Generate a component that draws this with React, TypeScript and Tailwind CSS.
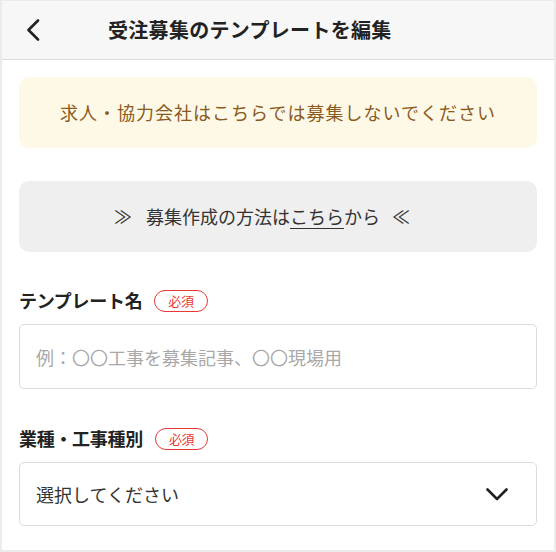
const font = { fontFamily: '"Noto Sans CJK JP", "Noto Sans", sans-serif' };

function RequiredBadge() {
    return (
        <span className="ml-[12px] inline-flex h-[22px] items-center rounded-full border-[1.5px] border-[#e53935] px-[13px] text-[13px] font-normal leading-none text-[#e53935]">
            必須
        </span>
    );
}

export default function App() {
    return (
        <div
            className="flex h-[552px] w-[556px] flex-col overflow-hidden border-x-2 border-b-2 border-t border-[#ebebeb] bg-white text-[#333]"
            style={font}
        >
            <header className="flex h-[59px] shrink-0 items-center border-b border-[#dedede] bg-[#f7f7f7]">
                <button type="button" className="ml-[24px] flex h-[24px] w-[16px] items-center" aria-label="戻る">
                    <svg width="14" height="22" viewBox="0 0 14 22" fill="none">
                        <path d="M12 1.5L2.5 11l9.5 9.5" stroke="#222" strokeWidth="2.6" strokeLinecap="round" strokeLinejoin="round" />
                    </svg>
                </button>
                <h1 className="ml-[66px] text-[20px] font-bold tracking-[0.3px] text-[#222]">受注募集のテンプレートを編集</h1>
            </header>

            <main className="flex flex-col px-[17px] pt-[17px]">
                <div className="flex h-[71px] items-center justify-center rounded-[10px] bg-[#fef9e7] text-[18px] tracking-[1px] text-[#8b5a1e]">
                    求人・協力会社はこちらでは募集しないでください
                </div>

                <div className="mt-[33px] flex h-[71px] items-center justify-center rounded-[10px] bg-[#efefef] pr-[32px] text-[18px] text-[#333]">
                    <span className="mr-[14px]">≫</span>
                    募集作成の方法は
                    <a className="underline underline-offset-4">こちら</a>
                    から
                    <span className="ml-[12px]">≪</span>
                </div>

                <label className="mt-[35px] flex items-center text-[18px] font-bold tracking-[-0.3px] text-[#222]">
                    テンプレート名
                    <RequiredBadge />
                </label>
                <input
                    className="mt-[10px] h-[65px] w-full rounded-[5px] border border-[#dcdcdc] px-4 text-[18px] text-[#333] outline-none placeholder:text-[#a8a8a8]"
                    placeholder="例：〇〇工事を募集記事、〇〇現場用"
                />

                <label className="mt-[36px] flex items-center text-[18px] font-bold tracking-[-0.3px] text-[#222]">
                    業種・工事種別
                    <RequiredBadge />
                </label>
                <button
                    type="button"
                    className="mt-[10px] flex h-[64px] w-full items-center justify-between rounded-[5px] border border-[#dcdcdc] pl-4 pr-[28px] text-[18px] text-[#333]"
                >
                    選択してください
                    <svg width="22" height="13" viewBox="0 0 22 13" fill="none">
                        <path d="M1.5 1.5l9.5 9.5 9.5-9.5" stroke="#222" strokeWidth="2.6" strokeLinecap="round" strokeLinejoin="round" />
                    </svg>
                </button>
            </main>
        </div>
    );
}
